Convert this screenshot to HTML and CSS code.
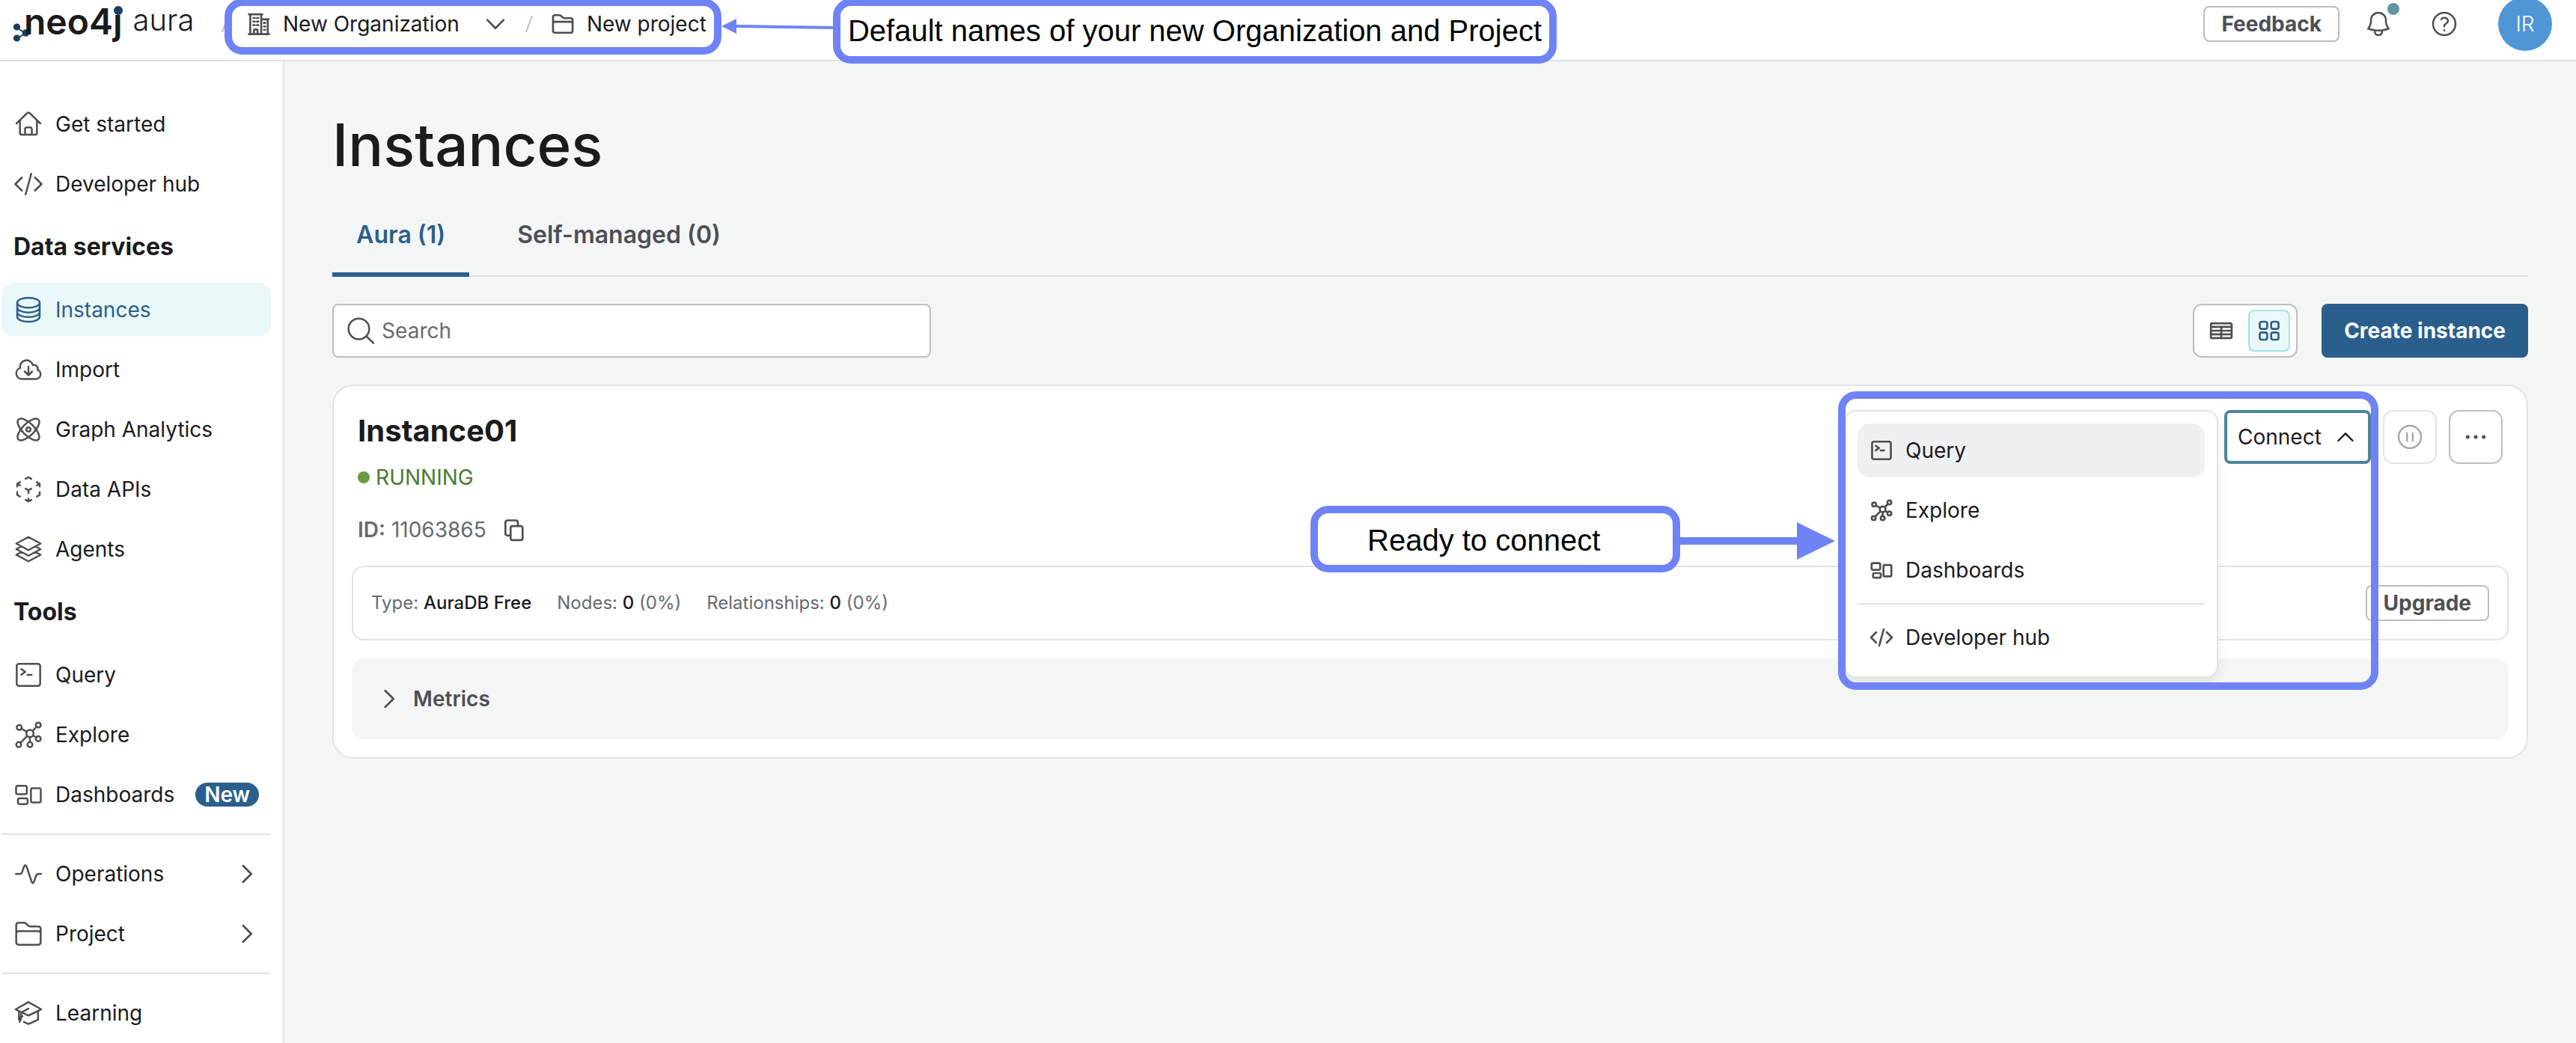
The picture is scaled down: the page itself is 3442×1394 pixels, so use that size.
FILE: index.html
```html
<!DOCTYPE html>
<html lang="en">
<head>
<meta charset="utf-8">
<title>Instances - Neo4j Aura</title>
<link rel="stylesheet" href="styles.css">
</head>
<body>
<svg class="sprite" aria-hidden="true">
  <symbol id="home" viewBox="0 0 24 24"><path d="M2.4 11.4 11 3.1q1-.8 2 0l8.600 8.300M5.200 9V19q0 1.400 1.400 1.400h10.800q1.400 0 1.400-1.400V9M9.300 20.400V16q0-1.500 1.400-1.500h2.600q1.400 0 1.400 1.500v4.400"/></symbol>
  <symbol id="code" viewBox="0 0 24 24"><path d="M17.250 6.750 22.500 12l-5.250 5.250m-10.500 0L1.500 12l5.250-5.250m7.500-3-4.500 16.500"/></symbol>
  <symbol id="database" viewBox="0 0 24 24"><ellipse cx="12" cy="6.400" rx="9" ry="4"/><path d="M3 6.400v11.200c0 2.200 4 4 9 4s9-1.800 9-4V6.400M3 10.200c0 2.200 4 4 9 4s9-1.800 9-4M3 13.900c0 2.200 4 4 9 4s9-1.800 9-4"/></symbol>
  <symbol id="cloud" viewBox="0 0 24 24"><path d="M12 9.750v6.750m0 0-3-3m3 3 3-3m-8.250 6a4.500 4.500 0 0 1-1.410-8.775 5.250 5.250 0 0 1 10.233-2.330 3 3 0 0 1 3.758 3.848A3.752 3.752 0 0 1 18 19.500H6.750Z"/></symbol>
  <symbol id="atom" viewBox="0 0 24 24"><ellipse cx="12" cy="12" rx="11.300" ry="4.800" transform="rotate(45 12 12)"/><ellipse cx="12" cy="12" rx="11.300" ry="4.800" transform="rotate(-45 12 12)"/><circle cx="12" cy="12" r="1.700"/></symbol>
  <symbol id="cube" viewBox="0 0 24 24"><path d="m21 7.500-2.250-1.313M21 7.500v2.250m0-2.250-2.250 1.313M3 7.500l2.250-1.313M3 7.500l2.250 1.313M3 7.500v2.250m9 3 2.250-1.313M12 12.750l-2.250-1.313M12 12.750V15m0 6.750 2.250-1.313M12 21.750V19.500m0 2.250-2.250-1.313m0-16.875L12 2.250l2.250 1.313M21 14.250v2.250l-2.250 1.313m-13.500 0L3 16.500v-2.250"/></symbol>
  <symbol id="layers" viewBox="0 0 24 24"><path d="M6.429 9.750 2.250 12l4.179 2.250m0-4.500 5.571 3 5.571-3m-11.142 0L2.250 7.500 12 2.250l9.750 5.250-4.179 2.250m0 0L21.750 12l-4.179 2.250m0 0 4.179 2.250L12 21.750 2.250 16.500l4.179-2.250m11.142 0-5.571 3-5.571-3"/></symbol>
  <symbol id="terminal" viewBox="0 0 24 24"><rect x="2.600" y="3.200" width="18.800" height="17.600" rx="1.800"/><path d="m6.300 7.300 3.200 2.300-3.200 2.300M11.200 12h3.400"/></symbol>
  <symbol id="graph" viewBox="0 0 24 24"><circle cx="13.200" cy="11" r="2.900"/><circle cx="4.600" cy="6.200" r="2"/><circle cx="19.900" cy="4.200" r="2"/><circle cx="19.900" cy="15.200" r="2"/><circle cx="13.200" cy="19.900" r="2"/><circle cx="4.200" cy="19.900" r="2"/><path d="m6.400 7.200 4.300 2.300M15.300 9l3.200-3.400M15.700 12.600l2.500 1.500M13.200 13.900v4M11 13l-5.300 5.400"/></symbol>
  <symbol id="dashboard" viewBox="0 0 24 24"><rect x="2.100" y="5" width="8.600" height="6.700" rx="1.300"/><rect x="3.600" y="15" width="7.700" height="4.600" rx="1.300"/><rect x="14" y="6.900" width="7.900" height="11.400" rx="1.300"/></symbol>
  <symbol id="pulse" viewBox="0 0 24 24"><path d="M2 12h3.200q1.200 0 1.700-1.300l1.600-4.600q1-2.400 2 0l4 12q1 2.400 2 0l1.600-4.600q.6-1.500 1.900-1.500h2.200"/></symbol>
  <symbol id="folder" viewBox="0 0 24 24"><path d="M2.200 10.200V5.200q0-2 2-2h4.300q.8 0 1.400.5l2.300 2q.6.500 1.400.5h6.200q2 0 2 2v10.600q0 2-2 2H4.200q-2 0-2-2v-7q0-1.900 2-1.900h15.600q2 0 2 1.900"/></symbol>
  <symbol id="cap" viewBox="0 0 24 24"><path d="M12 3.200 1.700 9l2.400 1.200L12 14l7.900-3.800L22.300 9 12 3.200ZM4.400 10.500v6.800M19.700 10.500v6.800L12 20.800l-3.600-1.700M12 8.500 7.200 11q-1 .5-1 1.800v2.700q0 2-1.300 3.600M7.200 14.500l-3 1.900"/></symbol>
  <symbol id="chevron-right" viewBox="0 0 24 24"><path d="m8 3.800 8.300 8.200L8 20.200"/></symbol>
  <symbol id="chevron-down" viewBox="0 0 24 24"><path d="m3.800 8 8.200 8.300L20.200 8"/></symbol>
  <symbol id="chevron-up" viewBox="0 0 24 24"><path d="m3.800 16.300 8.200-8.300 8.200 8.300"/></symbol>
  <symbol id="building" viewBox="0 0 24 24"><path d="M1.700 22.200h20.600M3.300 22V2.300M1.900 2.300h13.400M14.300 2.300V22M20.800 22V7.400M14.300 7.400h7.500M7 22v-3.600q0-.9.900-.9h1.800q.9 0 .9.900V22"/><path d="M6.400 6h1.400M10 6h1.400M6.400 9.600h1.400M10 9.600h1.400M6.400 13.200h1.400M10 13.200h1.400M17 11h1.200M17 14.500h1.200M17 18h1.200"/></symbol>
  <symbol id="bell" viewBox="0 0 24 24"><path d="M14.857 17.082a23.848 23.848 0 0 0 5.454-1.310A8.967 8.967 0 0 1 18 9.750V9A6 6 0 0 0 6 9v.750a8.967 8.967 0 0 1-2.312 6.022c1.733.640 3.560 1.085 5.455 1.310m5.714 0a24.255 24.255 0 0 1-5.714 0m5.714 0a3 3 0 1 1-5.714 0"/></symbol>
  <symbol id="help" viewBox="0 0 24 24"><circle cx="12" cy="12" r="9"/><path d="M9.600 8.200c1.300-1.600 4.100-1.400 5 .1.800 1.400 0 2.700-1.200 3.400-.9.500-1.400 1-1.400 2.200M12 17v.2"/></symbol>
  <symbol id="search" viewBox="0 0 24 24"><circle cx="10.500" cy="10.500" r="8.300"/><path d="m16.500 16.500 5.800 5.500"/></symbol>
  <symbol id="table" viewBox="0 0 24 24"><rect x="1.600" y="4.600" width="20.800" height="14.800" rx="1"/><path d="M1.600 8.200h20.800M1.600 12h20.800M1.600 15.700h20.800M12 8.200v11.200"/></symbol>
  <symbol id="grid" viewBox="0 0 24 24"><rect x="2.600" y="3" width="7.400" height="7.200" rx="2"/><rect x="14" y="3" width="7.400" height="7.200" rx="2"/><rect x="2.600" y="13.800" width="7.400" height="7.200" rx="2"/><rect x="14" y="13.800" width="7.400" height="7.200" rx="2"/></symbol>
  <symbol id="pause" viewBox="0 0 24 24"><circle cx="12" cy="12" r="9"/><path d="M9.700 9v6M14.300 9v6"/></symbol>
  <symbol id="more" viewBox="0 0 24 24"><path class="dots" d="M5.600 12h.01M12 12h.01M18.400 12h.01"/></symbol>
  <symbol id="copy" viewBox="0 0 24 24"><rect x="9.200" y="8.400" width="12" height="14" rx="2"/><path d="M9 17.800H6q-2 0-2-2v-11q0-2.200 2-2.200h8.500q2 0 2 2.200v3.400"/></symbol>
</svg>

<header class="topbar">
  <a class="logo" href="#" aria-label="neo4j aura home">
    <svg class="logo-mark" viewBox="0 0 22 36" aria-hidden="true"><path d="M4.500 6 16 13.500 4.500 20.500" /><circle cx="4.500" cy="5" r="3.600"/><circle cx="16.500" cy="13" r="3.800"/><circle cx="4.500" cy="20" r="3.600"/></svg>
    <span class="logo-neo">neo4j<i class="logo-dot"></i></span>
    <span class="logo-aura">aura</span>
  </a>
  <nav class="crumbs" aria-label="Breadcrumb">
    <svg class="slash" viewBox="0 0 10 24"><path d="M1 23 9 1"/></svg>
    <button class="crumb crumb-org" type="button"><svg class="icon icon-32"><use href="#building"/></svg>New Organization<svg class="icon icon-32 crumb-arrow"><use href="#chevron-down"/></svg></button>
    <svg class="slash" viewBox="0 0 10 24"><path d="M1 23 9 1"/></svg>
    <a class="crumb" href="#"><svg class="icon icon-32"><use href="#folder"/></svg>New project</a>
  </nav>
  <div class="top-actions">
    <button class="btn btn-small" type="button">Feedback</button>
    <button class="icon-btn" type="button" aria-label="Notifications"><svg class="icon icon-40"><use href="#bell"/></svg><i class="unread"></i></button>
    <button class="icon-btn" type="button" aria-label="Help"><svg class="icon icon-40"><use href="#help"/></svg></button>
    <button class="avatar" type="button">IR</button>
  </div>
</header>

<div class="layout">
  <nav class="sidebar" aria-label="Main">
    <a class="nav-item" href="#"><svg class="icon icon-40"><use href="#home"/></svg>Get started</a>
    <a class="nav-item" href="#"><svg class="icon icon-40"><use href="#code"/></svg>Developer hub</a>
    <h2 class="nav-heading">Data services</h2>
    <a class="nav-item active" href="#" aria-current="page"><svg class="icon icon-40"><use href="#database"/></svg>Instances</a>
    <a class="nav-item" href="#"><svg class="icon icon-40"><use href="#cloud"/></svg>Import</a>
    <a class="nav-item" href="#"><svg class="icon icon-40"><use href="#atom"/></svg>Graph Analytics</a>
    <a class="nav-item" href="#"><svg class="icon icon-40"><use href="#cube"/></svg>Data APIs</a>
    <a class="nav-item" href="#"><svg class="icon icon-40"><use href="#layers"/></svg>Agents</a>
    <h2 class="nav-heading">Tools</h2>
    <a class="nav-item" href="#"><svg class="icon icon-40"><use href="#terminal"/></svg>Query</a>
    <a class="nav-item" href="#"><svg class="icon icon-40"><use href="#graph"/></svg>Explore</a>
    <a class="nav-item" href="#"><svg class="icon icon-40"><use href="#dashboard"/></svg>Dashboards<span class="badge">New</span></a>
    <hr class="nav-rule">
    <button class="nav-item" type="button"><svg class="icon icon-40"><use href="#pulse"/></svg>Operations<svg class="icon icon-32 nav-arrow"><use href="#chevron-right"/></svg></button>
    <button class="nav-item" type="button"><svg class="icon icon-40"><use href="#folder"/></svg>Project<svg class="icon icon-32 nav-arrow"><use href="#chevron-right"/></svg></button>
    <hr class="nav-rule">
    <a class="nav-item" href="#"><svg class="icon icon-40"><use href="#cap"/></svg>Learning</a>
  </nav>

  <main class="content">
    <h1 class="page-title">Instances</h1>
    <div class="tabs" role="tablist">
      <button class="tab selected" type="button" role="tab" aria-selected="true">Aura (1)</button>
      <button class="tab" type="button" role="tab" aria-selected="false">Self-managed (0)</button>
    </div>

    <div class="toolbar">
      <label class="search"><svg class="icon icon-40"><use href="#search"/></svg><input type="search" placeholder="Search" aria-label="Search"></label>
      <div class="view-toggle">
        <button class="view" type="button" aria-label="Table view"><svg class="icon icon-32"><use href="#table"/></svg></button>
        <button class="view current" type="button" aria-label="Card view"><svg class="icon icon-32"><use href="#grid"/></svg></button>
      </div>
      <button class="btn btn-primary" type="button">Create instance</button>
    </div>

    <section class="card">
      <div class="card-head">
        <div class="summary">
          <h2 class="instance-name">Instance01</h2>
          <p class="status"><i class="status-dot"></i>RUNNING</p>
          <p class="instance-id"><span><b>ID:</b> 11063865</span><button class="copy" type="button" aria-label="Copy ID"><svg class="icon icon-32"><use href="#copy"/></svg></button></p>
        </div>
        <div class="card-actions">
          <div class="connect-group">
            <button class="connect" type="button" aria-expanded="true">Connect<svg class="icon icon-28"><use href="#chevron-up"/></svg></button>
            <div class="menu" role="menu">
              <a class="menu-item highlighted" href="#" role="menuitem"><svg class="icon icon-32"><use href="#terminal"/></svg>Query</a>
              <a class="menu-item" href="#" role="menuitem"><svg class="icon icon-32"><use href="#graph"/></svg>Explore</a>
              <a class="menu-item" href="#" role="menuitem"><svg class="icon icon-32"><use href="#dashboard"/></svg>Dashboards</a>
              <hr class="menu-rule">
              <a class="menu-item" href="#" role="menuitem"><svg class="icon icon-32"><use href="#code"/></svg>Developer hub</a>
            </div>
            <div class="callout callout-menu"></div>
            <div class="callout callout-ready">Ready to connect</div>
            <svg class="arrow arrow-ready" viewBox="0 0 208 50"><path d="M0 20h157V0l51 25-51 25V30H0Z"/></svg>
          </div>
          <button class="square" type="button" aria-label="Pause" disabled><svg class="icon icon-40"><use href="#pause"/></svg></button>
          <button class="square" type="button" aria-label="More actions"><svg class="icon icon-40"><use href="#more"/></svg></button>
        </div>
      </div>

      <div class="details">
        <span class="fact">Type: <b>AuraDB Free</b></span>
        <span class="fact">Nodes: <b>0</b> (0%)</span>
        <span class="fact">Relationships: <b>0</b> (0%)</span>
        <button class="btn btn-small" type="button">Upgrade</button>
      </div>

      <button class="metrics" type="button" aria-expanded="false"><svg class="icon icon-32"><use href="#chevron-right"/></svg>Metrics</button>
    </section>
  </main>
</div>

<div class="callout callout-crumbs"></div>
<svg class="arrow arrow-names" viewBox="0 0 150 22"><path d="M0 10 20 0v8l130 2v4L20 12v8Z"/></svg>
<div class="callout callout-names">Default names of your new Organization and Project</div>
</body>
</html>
```

FILE: styles.css
```css
* { box-sizing: border-box; }

:root {
  --ink: #1a1b1d;
  --soft: #4d4f55;
  --muted: #656a73;
  --line: #e2e3e5;
  --edge: #bbbec3;
  --blue: #2a5f8c;
  --tint: #eaf8f9;
  --page: #f4f6f6;
  --mark: #6f83f7;
}

body {
  position: relative;
  display: flex;
  flex-direction: column;
  min-height: 100vh;
  margin: 0;
  overflow-x: hidden;
  background: var(--page);
  color: var(--ink);
  font: 400 28px/40px Inter, "Liberation Sans", sans-serif;
}

h1, h2, p { margin: 0; }
a { color: inherit; text-decoration: none; }
button { margin: 0; padding: 0; border: 0; background: none; color: inherit; font: inherit; text-align: left; }
b { font-weight: 600; }
.sprite { display: none; }

.icon { flex: none; fill: none; stroke: var(--soft); stroke-width: 1.5; stroke-linecap: round; stroke-linejoin: round; }
.icon-28 { width: 28px; height: 28px; }
.icon-32 { width: 32px; height: 32px; stroke-width: 2; }
.icon-40 { width: 40px; height: 40px; }
.dots { stroke-width: 3; }

/* Top bar */
.topbar {
  display: flex;
  align-items: center;
  height: 82px;
  padding: 0 32px 16px 18px;
  border-bottom: 2px solid var(--line);
  background: #fff;
}
.logo { display: flex; align-items: center; width: 278px; height: 64px; }
.logo-mark { width: 22px; height: 36px; margin: 34px -8px 0 0; fill: #17405f; stroke: #17405f; stroke-width: 2; }
.logo-mark path { fill: none; }
.logo-neo { position: relative; margin-bottom: 6px; font-size: 48px; font-weight: 600; }
.logo-dot { position: absolute; top: -1px; right: 0; width: 12px; height: 12px; border-radius: 50%; background: #17405f; }
.logo-aura { margin: 0 0 10px 14px; font-size: 40px; font-weight: 300; }
.crumbs { display: flex; align-items: center; gap: 24px; }
.slash { width: 10px; height: 24px; fill: none; stroke: var(--edge); stroke-width: 2; }
.crumb { display: flex; align-items: center; gap: 16px; white-space: nowrap; }
.crumb-arrow { margin-left: 16px; }
.top-actions { display: flex; align-items: center; gap: 16px; margin-left: auto; }
.icon-btn { position: relative; display: grid; place-items: center; width: 72px; height: 64px; }
.unread { position: absolute; top: 4px; right: 8px; width: 16px; height: 16px; border-radius: 50%; background: #5f98a3; }
.avatar { flex: none; width: 72px; height: 72px; margin-left: 20px; border-radius: 50%; background: #4f96d7; color: #fff; font-size: 28px; font-weight: 300; text-align: center; }

.btn { flex: none; border-radius: 8px; font-weight: 700; text-align: center; white-space: nowrap; }
.btn-small { height: 48px; padding: 0 22px; border: 2px solid var(--edge); background: #fff; color: var(--soft); }
.btn-primary { height: 72px; padding: 0 30px; background: var(--blue); color: #fff; }

/* Sidebar */
.layout { display: flex; flex: 1; }
.sidebar {
  display: flex;
  flex: 0 0 380px;
  flex-direction: column;
  gap: 8px;
  padding: 48px 16px 4px 2px;
  border-right: 2px solid var(--line);
  background: #fff;
}
.nav-item { display: flex; align-items: center; gap: 16px; height: 72px; padding: 0 16px; border-radius: 16px; white-space: nowrap; }
.nav-item.active { background: var(--tint); color: var(--blue); }
.nav-item.active .icon { stroke: var(--blue); }
.nav-heading { height: 80px; padding: 0 16px; font-size: 32px; font-weight: 700; line-height: 80px; }
.nav-rule { width: 100%; height: 2px; margin: 8px 0; border: 0; background: var(--line); }
.nav-arrow { margin-left: auto; }
.badge { margin-left: 12px; padding: 0 12px; border-radius: 16px; background: var(--blue); color: #fff; font-weight: 600; line-height: 32px; }

/* Page */
.content { flex: 1; min-width: 0; padding: 72px 64px 64px; }
.page-title { font-size: 78px; font-weight: 500; line-height: 80px; }
.tabs { display: flex; gap: 32px; margin-top: 36px; box-shadow: inset 0 -2px var(--line); }
.tab { padding: 24px 32px 30px; border-bottom: 6px solid transparent; border-radius: 6px 6px 0 0; color: var(--soft); font-size: 32px; font-weight: 600; }
.tab.selected { background: linear-gradient(var(--blue), var(--blue)) bottom / 100% 6px no-repeat border-box; color: var(--blue); }

.toolbar { display: flex; align-items: center; margin: 36px 0; }
.search { display: flex; align-items: center; gap: 8px; width: 800px; height: 72px; padding: 0 16px; border: 2px solid var(--edge); border-radius: 8px; background: #fff; }
.search input { flex: 1; min-width: 0; padding: 0; border: 0; outline: 0; background: none; font: inherit; }
.search input::placeholder { color: var(--muted); opacity: 1; }
.view-toggle { display: flex; gap: 8px; margin: 0 32px 0 auto; padding: 6px 8px; border: 2px solid var(--edge); border-radius: 12px; background: #fff; }
.view { display: grid; place-items: center; width: 56px; height: 56px; border: 2px solid transparent; border-radius: 8px; }
.view.current { border-color: #a3e2e6; background: var(--tint); }
.view.current .icon { stroke: var(--blue); }

/* Instance card */
.card { display: flex; flex-direction: column; gap: 24px; padding: 24px; border: 2px solid var(--line); border-radius: 28px; background: #fff; }
.card-head { display: flex; justify-content: space-between; margin-bottom: -24px; padding: 8px 8px 28px; }
.instance-name { font-size: 40px; font-weight: 700; line-height: 56px; }
.status { display: flex; align-items: center; gap: 8px; margin-top: 14px; color: #4b7a32; }
.status-dot { width: 16px; height: 16px; border-radius: 50%; background: #6a9a41; }
.instance-id { display: flex; align-items: center; gap: 20px; margin-top: 30px; color: var(--muted); }
.copy { display: grid; height: 32px; }
.card-actions { display: flex; align-items: flex-start; gap: 16px; }
.connect-group { position: relative; }
.connect { display: flex; align-items: center; justify-content: space-between; width: 196px; height: 72px; padding: 0 16px 0 14px; border: 4px solid #4c859b; border-radius: 8px; background: #fff; }
.connect .icon { stroke: var(--ink); stroke-width: 2; }
.square { display: grid; place-items: center; width: 72px; height: 72px; border: 2px solid var(--edge); border-radius: 14px; background: #fff; }
.square:disabled { border-color: var(--line); }
.square:disabled .icon { stroke: #a6a9af; }

.menu {
  position: absolute;
  top: 0;
  right: calc(100% + 8px);
  z-index: 1;
  display: flex;
  flex-direction: column;
  gap: 8px;
  width: 500px;
  padding: 16px;
  border: 2px solid var(--line);
  border-radius: 16px;
  background: #fff;
  box-shadow: 0 8px 16px rgba(12, 26, 37, .08);
}
.menu-item { display: flex; align-items: center; gap: 16px; height: 72px; padding: 0 16px; border-radius: 16px; }
.menu-item.highlighted { background: #eff0f2; }
.menu-rule { width: 100%; height: 2px; margin: 0; border: 0; background: var(--line); }

.details { display: flex; align-items: center; gap: 34px; padding: 24px; border: 2px solid var(--line); border-radius: 16px; color: var(--muted); font-size: 24px; line-height: 48px; }
.fact b { color: var(--ink); font-weight: 500; }
.details .btn { margin-left: auto; font-size: 28px; line-height: 40px; }
.metrics { display: flex; align-items: center; gap: 16px; height: 108px; padding: 0 34px; border-radius: 16px; background: var(--page); color: var(--soft); font-weight: 600; }

/* Callouts drawn over the interface */
.callout { position: absolute; z-index: 2; border: 10px solid var(--mark); border-radius: 24px; color: #000; font: 40px/64px "Liberation Sans", sans-serif; white-space: nowrap; }
.callout-crumbs { top: -2px; left: 300px; width: 664px; height: 75px; }
.callout-names { top: -2px; left: 1113px; width: 967px; height: 87px; background: #fff; line-height: 67px; text-align: center; }
.callout-menu { top: -25px; right: -10px; width: 722px; height: 399px; }
.callout-ready { top: 128px; right: 923px; width: 494px; height: 89px; padding-left: 66px; background: #fff; line-height: 72px; }
.arrow { position: absolute; z-index: 2; fill: var(--mark); }
.arrow-names { top: 25px; left: 964px; width: 150px; height: 22px; }
.arrow-ready { top: 150px; right: 716px; width: 208px; height: 50px; }
```
